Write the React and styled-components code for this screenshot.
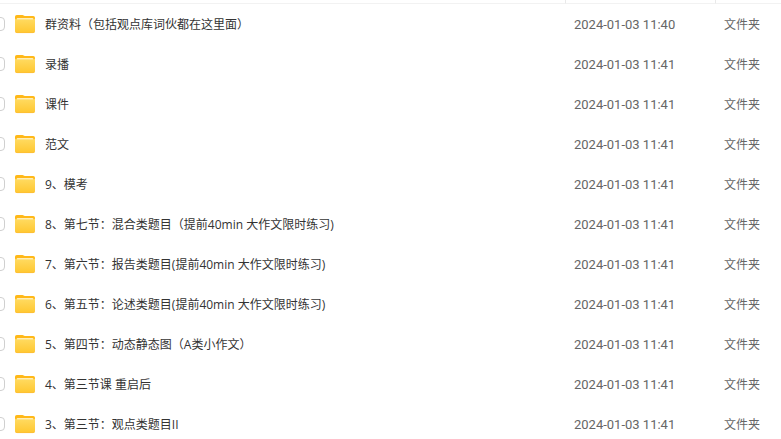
import React from "react";
import styled, { createGlobalStyle } from "styled-components";

const GlobalStyle = createGlobalStyle`
  body {
    margin: 0;
    background: #fff;
    overflow: hidden;
  }
`;

const FileList = styled.main`
  height: 100vh;
  overflow: hidden;
  font-family: "Open Sans", "Noto Sans CJK SC", sans-serif;
  font-size: 12px;
  line-height: 16px;
`;

const Table = styled.table`
  width: 100%;
  table-layout: fixed;
  border-collapse: separate;
  border-spacing: 0;
`;

const HeadCell = styled.th`
  box-sizing: border-box;
  width: ${(props) => props.$width || "auto"};
  height: 4px;
  padding: 0;
  border-bottom: 1px solid #f2f2f2;
  border-left: ${(props) => (props.$divider ? "1px solid #e9e9e9" : "none")};
`;

const Cell = styled.td`
  box-sizing: border-box;
  height: 40px;
  padding: 2px 0 0 9px;
  color: #666;
  white-space: nowrap;
`;

const DateCell = styled(Cell)`
  font-family: Roboto, sans-serif;
  font-size: 13px;
`;

const NameCell = styled(Cell)`
  padding: 0;
  color: #333;
`;

const NameContent = styled.label`
  display: flex;
  align-items: center;
  gap: 10px;
  margin-left: -9px;
`;

const FileName = styled.span`
  padding-top: 2px;
`;

const Checkbox = styled.input`
  appearance: none;
  box-sizing: border-box;
  width: 14px;
  height: 14px;
  margin: 0;
  border: 1px solid #d0d0d0;
  border-radius: 4px;
  background: #fff;
`;

const Icon = styled.svg`
  flex: none;
  width: 20px;
  height: 20px;
`;

const FolderIcon = () => (
  <Icon viewBox="0 0 20 20" aria-hidden="true">
    <defs>
      <linearGradient id="folderFront" x1="0" y1="0" x2="0" y2="1">
        <stop offset="0" stopColor="#ffdb63" />
        <stop offset="1" stopColor="#ffc72f" />
      </linearGradient>
      <linearGradient id="folderPaper" x1="0" y1="0" x2="0" y2="1">
        <stop offset="0" stopColor="#fff0bd" />
        <stop offset="1" stopColor="#ffe48c" />
      </linearGradient>
    </defs>
    <path
      d="M0 2.8A1.8 1.8 0 0 1 1.8 1H7.4C8.6 1 8.8 2 9.8 2H18.2A1.8 1.8 0 0 1 20 3.8V16H0Z"
      fill="#ffb818"
    />
    <rect x="1.6" y="4" width="16.8" height="4" rx="1" fill="url(#folderPaper)" />
    <path
      d="M0 4.5C0.6 5.3 1.2 5.5 2 5.5H18C18.8 5.5 19.4 5.3 20 4.5V17A2 2 0 0 1 18 19H2A2 2 0 0 1 0 17Z"
      fill="url(#folderFront)"
    />
    <path d="M0.2 17.4Q0.6 18.6 2 18.6H18Q19.4 18.6 19.8 17.4" fill="none" stroke="#fdbd35" strokeWidth="0.8" />
  </Icon>
);

const files = [
  { name: "群资料（包括观点库词伙都在这里面）", date: "2024-01-03 11:40" },
  { name: "录播", date: "2024-01-03 11:41" },
  { name: "课件", date: "2024-01-03 11:41" },
  { name: "范文", date: "2024-01-03 11:41" },
  { name: "9、模考", date: "2024-01-03 11:41" },
  { name: "8、第七节：混合类题目（提前40min 大作文限时练习)", date: "2024-01-03 11:41" },
  { name: "7、第六节：报告类题目(提前40min 大作文限时练习)", date: "2024-01-03 11:41" },
  { name: "6、第五节：论述类题目(提前40min 大作文限时练习)", date: "2024-01-03 11:41" },
  { name: "5、第四节：动态静态图（A类小作文）", date: "2024-01-03 11:41" },
  { name: "4、第三节课 重启后", date: "2024-01-03 11:41" },
  { name: "3、第三节：观点类题目II", date: "2024-01-03 11:41" },
];

const App = () => {
  return (
    <FileList lang="zh-CN">
      <GlobalStyle />
      <Table>
        <thead>
          <tr>
            <HeadCell />
            <HeadCell $width="150px" $divider />
            <HeadCell $width="66px" $divider />
          </tr>
        </thead>
        <tbody>
          {files.map((file) => (
            <tr key={file.name}>
              <NameCell>
                <NameContent>
                  <Checkbox type="checkbox" />
                  <FolderIcon />
                  <FileName>{file.name}</FileName>
                </NameContent>
              </NameCell>
              <DateCell>{file.date}</DateCell>
              <Cell>文件夹</Cell>
            </tr>
          ))}
        </tbody>
      </Table>
    </FileList>
  );
};

export default App;
